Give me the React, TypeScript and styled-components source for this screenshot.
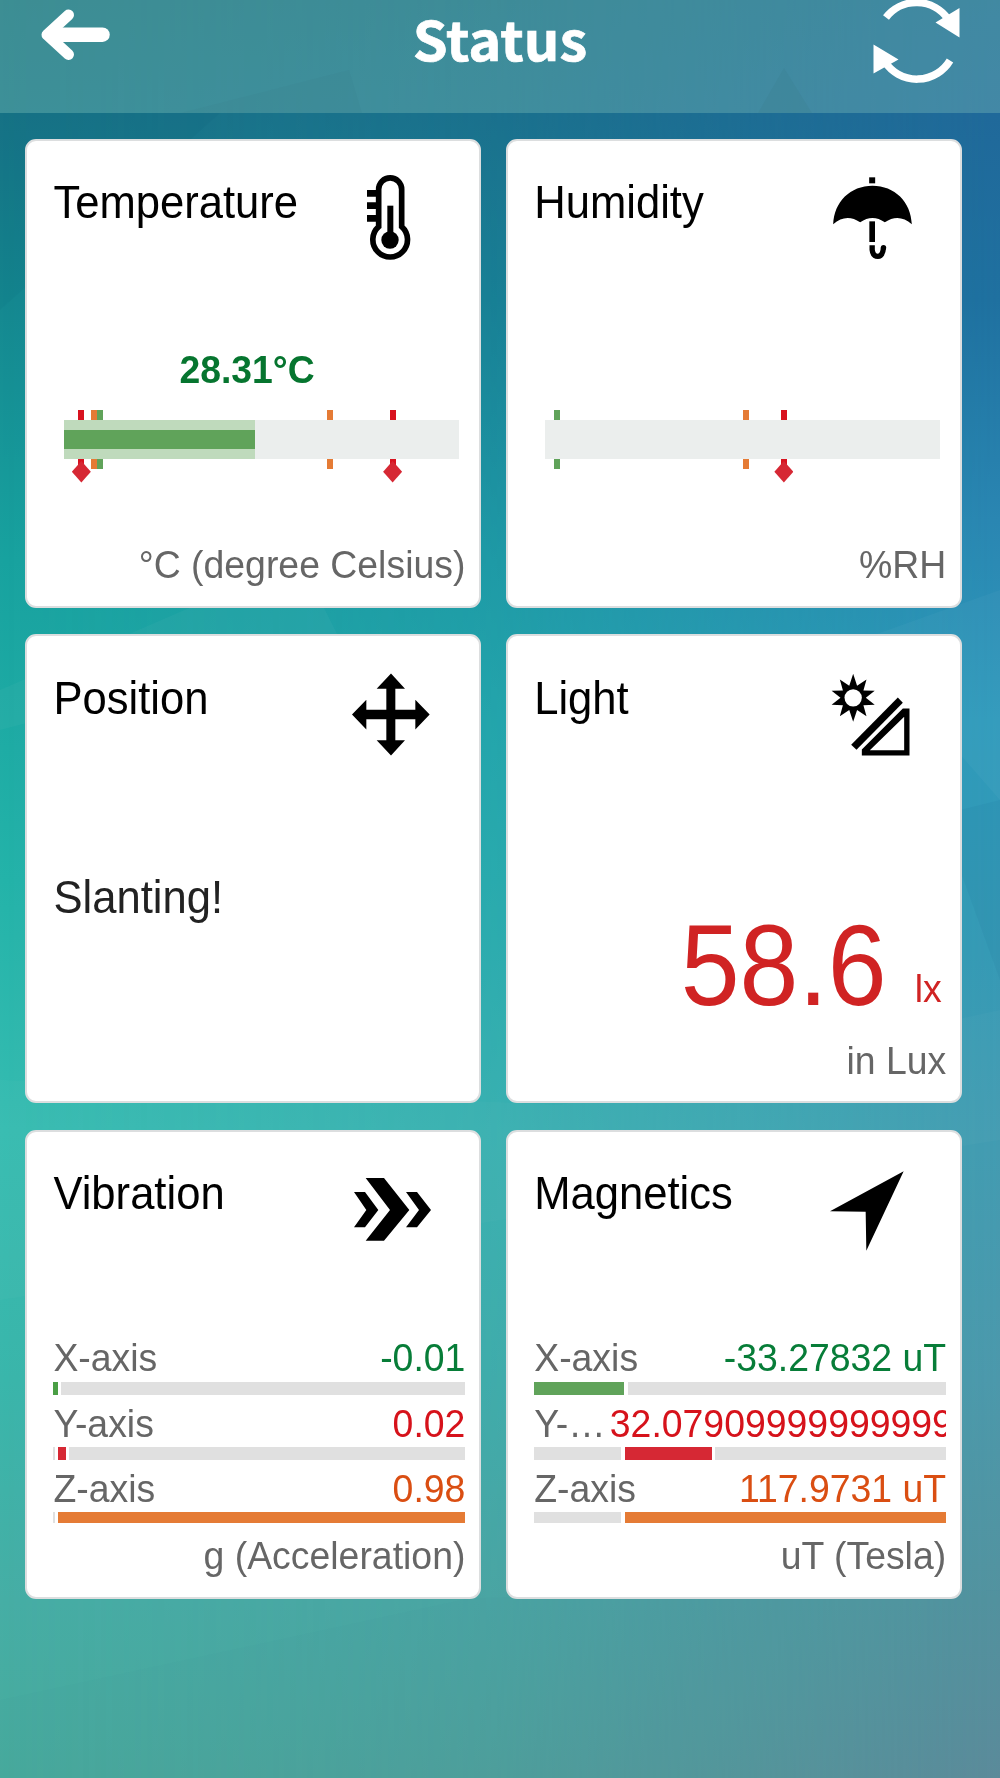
import React from "react";
import styled, { createGlobalStyle } from "styled-components";

const GREEN = "#60a35a";
const ORANGE = "#e57b35";
const RED = "#d62834";
const GREY = "#e0e0e0";

const Global = createGlobalStyle`
  body { margin: 0; }
  *, *::before, *::after { box-sizing: border-box; }
`;

const Page = styled.div`
  position: relative;
  width: 1000px;
  height: 1778px;
  overflow: hidden;
  font-family: "Liberation Sans", Arial, sans-serif;
  background: linear-gradient(
    to bottom,
    #17717f 0, #187587 115px, #158890 300px, #18a29f 560px, #24b3a9 880px,
    #36bcb1 1130px, #3ab6ab 1380px, #46aea5 1600px, #48ab9d 1778px
  );
  &::before {
    content: "";
    position: absolute;
    inset: 0;
    background: linear-gradient(
      to bottom,
      #1d6a94 0, #20699a 115px, #1f70a0 300px, #2a86b2 520px, #2f99bb 720px,
      #3699b5 950px, #439bb1 1150px, #4c98ab 1380px, #53929f 1600px, #5c8b9b 1778px
    );
    mask-image: linear-gradient(to right, transparent, rgba(0, 0, 0, 0.34) 50%, #000);
  }
`;

const Facets = styled.svg`
  position: absolute;
  inset: 0;
`;

const Content = styled.div`
  position: relative;
`;

const Header = styled.header`
  display: grid;
  grid-template-columns: 150px 1fr 150px;
  height: 113px;
  background: rgba(150, 210, 195, 0.3);
`;

const Heading = styled.h1`
  margin: -10px 0 0;
  color: #fff;
  text-align: center;
  font: bold 56px/95px "Noto Sans CJK JP", "Open Sans", sans-serif;
  height: 95px;
  -webkit-text-stroke: 0.7px #fff;
  transform: scaleY(0.965);
`;

const Grid = styled.main`
  display: grid;
  grid-template-columns: 456px 456px;
  grid-auto-rows: 469px;
  gap: 26.5px 24.8px;
  padding: 25.5px 25.4px;
`;

const Card = styled.section`
  display: flex;
  flex-direction: column;
  padding: 34.5px 14px 21.5px 26px;
  background: #fff;
  border: 2px solid #dcdedf;
  border-radius: 11px;
`;

const CardHead = styled.div`
  display: flex;
  justify-content: space-between;
  height: 90px;
  padding-right: 31.5px;
`;

const Title = styled.h2`
  height: 56px;
  margin: -0.6px 0 0;
  font-size: 43.6px;
  line-height: 56px;
  font-weight: normal;
  color: #000;
  transform: scaleY(1.045);
`;

const Icon = styled.svg`
  width: 84px;
  height: 90px;
  overflow: visible;
`;

const Body = styled.div`
  flex: 1;
`;

const Label = styled.div<{ $color?: string; $bold?: boolean }>`
  font-size: 37.4px;
  line-height: 50px;
  height: 50px;
  margin: -5px 0;
  white-space: nowrap;
  color: ${(p) => p.$color ?? "#666"};
  font-weight: ${(p) => (p.$bold ? "bold" : "normal")};
  transform: scaleY(1.05);
`;

const Unit = styled(Label)`
  text-align: right;
`;

const GaugeValue = styled(Label)`
  margin: 0 0 26px;
  padding-left: 126px;
  font-size: 37.3px;
`;

const GaugeArea = styled.div`
  padding-top: 79px;
`;

const Gauge = styled.div`
  position: relative;
  height: 39px;
  margin: 0 6.5px 0 11px;
`;

const Track = styled.div`
  position: relative;
  height: 39px;
  background: #ebeeed;
`;

const Fill = styled.div`
  height: 39px;
  background: linear-gradient(#bfdabc 10px, #60a35a 10px, #60a35a 29px, #bfdabc 29px);
`;

const Tick = styled.i<{ $color: string }>`
  position: absolute;
  top: -10px;
  width: 6px;
  height: 59px;
  margin-left: -3px;
  background: ${(p) => p.$color};
`;

const Diamond = styled.i`
  position: absolute;
  top: 41px;
  width: 19px;
  height: 21.5px;
  margin-left: -9.5px;
  background: ${RED};
  clip-path: polygon(50% 0, 100% 50%, 50% 100%, 0 50%);
`;

const Message = styled.div`
  margin-top: 108px;
  font-size: 43.6px;
  line-height: 56px;
  color: #222;
  transform: scaleY(1.045);
`;

const Reading = styled.div`
  display: flex;
  justify-content: flex-end;
  gap: 28px;
  padding: 151.2px 4.5px 0 0;
`;

const BigNumber = styled.div`
  font-size: 105.8px;
  line-height: 106px;
  color: #d02323;
  transform: scaleY(1.08);
`;

const Suffix = styled(Label)`
  margin-top: 51px;
`;

const Axes = styled.div`
  display: flex;
  flex-direction: column;
  gap: 8.6px;
  padding-top: 82px;
`;

const AxisText = styled.div`
  display: flex;
  justify-content: space-between;
  height: 40px;
`;

const AxisName = styled(Label)`
  margin-top: -5.6px;
  min-width: 0;
  overflow: hidden;
  text-overflow: ellipsis;
`;

const AxisValue = styled(Label)`
  flex: none;
  margin-top: -5.6px;
  max-width: 336.4px;
  overflow: hidden;
`;

const Bar = styled.div<{ $height: number }>`
  display: flex;
  gap: 3.5px;
  height: ${(p) => p.$height}px;
  margin-top: 3.6px;
`;

const Segment = styled.div<{ $color: string; $width?: number }>`
  flex: ${(p) => (p.$width === undefined ? "1" : `0 0 ${p.$width}px`)};
  background: ${(p) => p.$color};
`;

type Mark = { at: number; color: string; alarm?: boolean };

function LevelGauge({ value, level, marks }: { value?: string; level?: number; marks: Mark[] }) {
  return (
    <GaugeArea>
      <GaugeValue $bold $color="#06752f">{value}</GaugeValue>
      <Gauge>
        {marks.map((m) => (
          <Tick key={m.at} $color={m.color} style={{ left: `${m.at}%` }} />
        ))}
        {marks.filter((m) => m.alarm).map((m) => (
          <Diamond key={m.at} style={{ left: `${m.at}%` }} />
        ))}
        <Track>{level !== undefined && <Fill style={{ width: `${level}%` }} />}</Track>
      </Gauge>
    </GaugeArea>
  );
}

type Axis = { name: string; value: string; color: string; parts: [string, number?][] };

function AxisList({ axes }: { axes: Axis[] }) {
  return (
    <Axes>
      {axes.map((a, i) => (
        <div key={a.name}>
          <AxisText>
            <AxisName>{a.name}</AxisName>
            <AxisValue $color={a.color}>{a.value}</AxisValue>
          </AxisText>
          <Bar $height={i === 2 ? 11 : 13}>
            {a.parts.map(([color, width], j) => (
              <Segment key={j} $color={color} $width={width} />
            ))}
          </Bar>
        </div>
      ))}
    </Axes>
  );
}

function Tile(props: { title: string; icon: React.ReactNode; unit?: string; children: React.ReactNode }) {
  return (
    <Card>
      <CardHead>
        <Title>{props.title}</Title>
        {props.icon}
      </CardHead>
      <Body>{props.children}</Body>
      <Unit>{props.unit}</Unit>
    </Card>
  );
}

const Thermometer = () => (
  <Icon viewBox="30 45 252 270">
    <path
      d="M116 200V88a34.5 34.5 0 0 1 69 0V200A52 52 0 1 1 116 200Z"
      fill="none" stroke="#000" strokeWidth="17"
    />
    <path d="M81 100H112M81 137H112M81 175H112" stroke="#000" strokeWidth="20" />
    <path d="M151 137V240" stroke="#000" strokeWidth="18" />
    <circle cx="150" cy="240" r="26" />
  </Icon>
);

const Umbrella = () => (
  <Icon viewBox="991.5 135 252 270">
    <rect x="1106" y="142" width="18" height="18" />
    <path d="M998 283C1000 215 1050 167 1116 167S1232 215 1234 283Q1195 248 1153 277Q1116 251 1079 277Q1037 248 998 283Z" />
    <path d="M1115 274V336" stroke="#000" strokeWidth="17" />
    <path d="M1115 346V359Q1117 379 1132 379T1149 352" fill="none" stroke="#000" strokeWidth="16" />
    <circle cx="1149" cy="353" r="8" />
  </Icon>
);

const Move = () => (
  <Icon viewBox="30 61.5 252 270">
    <path d="M153 69L195 115H166V178H226V148L269 192L226 237V206H166V269H195L153 315L110 269H139V206H79V237L36 192L79 148V178H139V115H110Z" />
  </Icon>
);

const sunPoints = Array.from({ length: 20 }, (_, i) => {
  const angle = (i * Math.PI) / 10 - Math.PI / 2;
  const r = i % 2 ? 38 : i % 10 ? 68 : 72;
  return `${128 + r * Math.cos(angle)},${142 + r * Math.sin(angle)}`;
}).join(" ");

const LightIcon = () => (
  <Icon viewBox="61.5 61.5 252 270">
    <polygon points={sunPoints} />
    <circle cx="128" cy="142" r="26" fill="#fff" />
    <path d="M262 141L277 157L138 298L122 283Z" />
    <path fillRule="evenodd" d="M154 315V297L277 174H297V315ZM178 299H281V199Z" />
  </Icon>
);

const Chevrons = () => (
  <Icon viewBox="30 48 252 270">
    <path d="M42 126H75L115 180L75 232H42L79 180Z" />
    <path d="M77 84H132L208 180L132 272H77L150 180Z" />
    <path d="M198 126H231L273 180L231 232H198L237 180Z" />
  </Icon>
);

const Pointer = () => (
  <Icon viewBox="0 0 252 270">
    <path d="M218 16L106 254L104 137L-3 136Z" />
  </Icon>
);

export default function App() {
  return (
    <Page>
      <Global />
      <Facets width="1000" height="1778" viewBox="0 0 1000 1778">
        <path d="M180 113L349 70L362 113Z" fill="#003a50" opacity=".06" />
        <path d="M758 113L784 68L812 113Z" fill="#003a50" opacity=".1" />
        <path d="M0 310L220 113H0Z" fill="#063c5a" opacity=".05" />
        <path d="M300 560L340 640L0 730V690Z" fill="#fff" opacity=".03" />
        <path d="M1000 590L860 640L1000 800Z" fill="#fff" opacity=".03" />
        <path d="M1000 800L940 815L1000 980Z" fill="#004070" opacity=".05" />
        <path d="M0 1080L560 1105L1000 1010V1140L0 1300Z" fill="#fff" opacity=".025" />
        <path d="M0 1700L470 1598L1000 1590V1778H0Z" fill="#335f80" opacity=".02" />
      </Facets>
      <Content>
        <Header>
          <svg width="150" height="113" viewBox="0 0 150 113">
            <g fill="none" stroke="#fff" strokeLinecap="round" strokeLinejoin="round">
              <path d="M68.5 15L47 34.7L68.5 54.5" strokeWidth="11" />
              <path d="M52 34.7H102.5" strokeWidth="14.5" />
            </g>
          </svg>
          <Heading>Status</Heading>
          <svg width="150" height="113" viewBox="850 0 150 113">
            <g fill="none" stroke="#fff" strokeWidth="7.5">
              <path d="M886 17.5A38.5 38.5 0 0 1 948 19" />
              <path d="M950 60.5A38.5 38.5 0 0 1 885 62" />
            </g>
            <path d="M959.5 8V37.5L935.5 22.5ZM873.5 44.5V73.5L898.5 59.5Z" fill="#fff" />
          </svg>
        </Header>
        <Grid>
          <Tile title="Temperature" icon={<Thermometer />} unit="°C (degree Celsius)">
            <LevelGauge
              value="28.31°C"
              level={48.2}
              marks={[
                { at: 4.3, color: "#d8121f", alarm: true },
                { at: 7.5, color: ORANGE },
                { at: 9, color: GREEN },
                { at: 67.3, color: ORANGE },
                { at: 83.2, color: "#d8121f", alarm: true },
              ]}
            />
          </Tile>
          <Tile title="Humidity" icon={<Umbrella />} unit="%RH">
            <LevelGauge
              marks={[
                { at: 3, color: GREEN },
                { at: 51, color: ORANGE },
                { at: 60.5, color: "#d8121f", alarm: true },
              ]}
            />
          </Tile>
          <Tile title="Position" icon={<Move />}>
            <Message>Slanting!</Message>
          </Tile>
          <Tile title="Light" icon={<LightIcon />} unit="in Lux">
            <Reading>
              <BigNumber>58.6</BigNumber>
              <Suffix $color="#d02323">lx</Suffix>
            </Reading>
          </Tile>
          <Tile title="Vibration" icon={<Chevrons />} unit="g (Acceleration)">
            <AxisList
              axes={[
                { name: "X-axis", value: "-0.01", color: "#077d38", parts: [["#4a9f45", 4.5], [GREY]] },
                { name: "Y-axis", value: "0.02", color: "#d6121b", parts: [[GREY, 1.3], [RED, 7.5], [GREY]] },
                { name: "Z-axis", value: "0.98", color: "#da4e12", parts: [[GREY, 1.3], [ORANGE]] },
              ]}
            />
          </Tile>
          <Tile title="Magnetics" icon={<Pointer />} unit="uT (Tesla)">
            <AxisList
              axes={[
                { name: "X-axis", value: "-33.27832 uT", color: "#077d38", parts: [[GREEN, 90], [GREY]] },
                { name: "Y-axis", value: "32.07909999999999", color: "#d6121b", parts: [[GREY, 87], [RED, 87], [GREY]] },
                { name: "Z-axis", value: "117.9731 uT", color: "#da4e12", parts: [[GREY, 87], [ORANGE]] },
              ]}
            />
          </Tile>
        </Grid>
      </Content>
    </Page>
  );
}
